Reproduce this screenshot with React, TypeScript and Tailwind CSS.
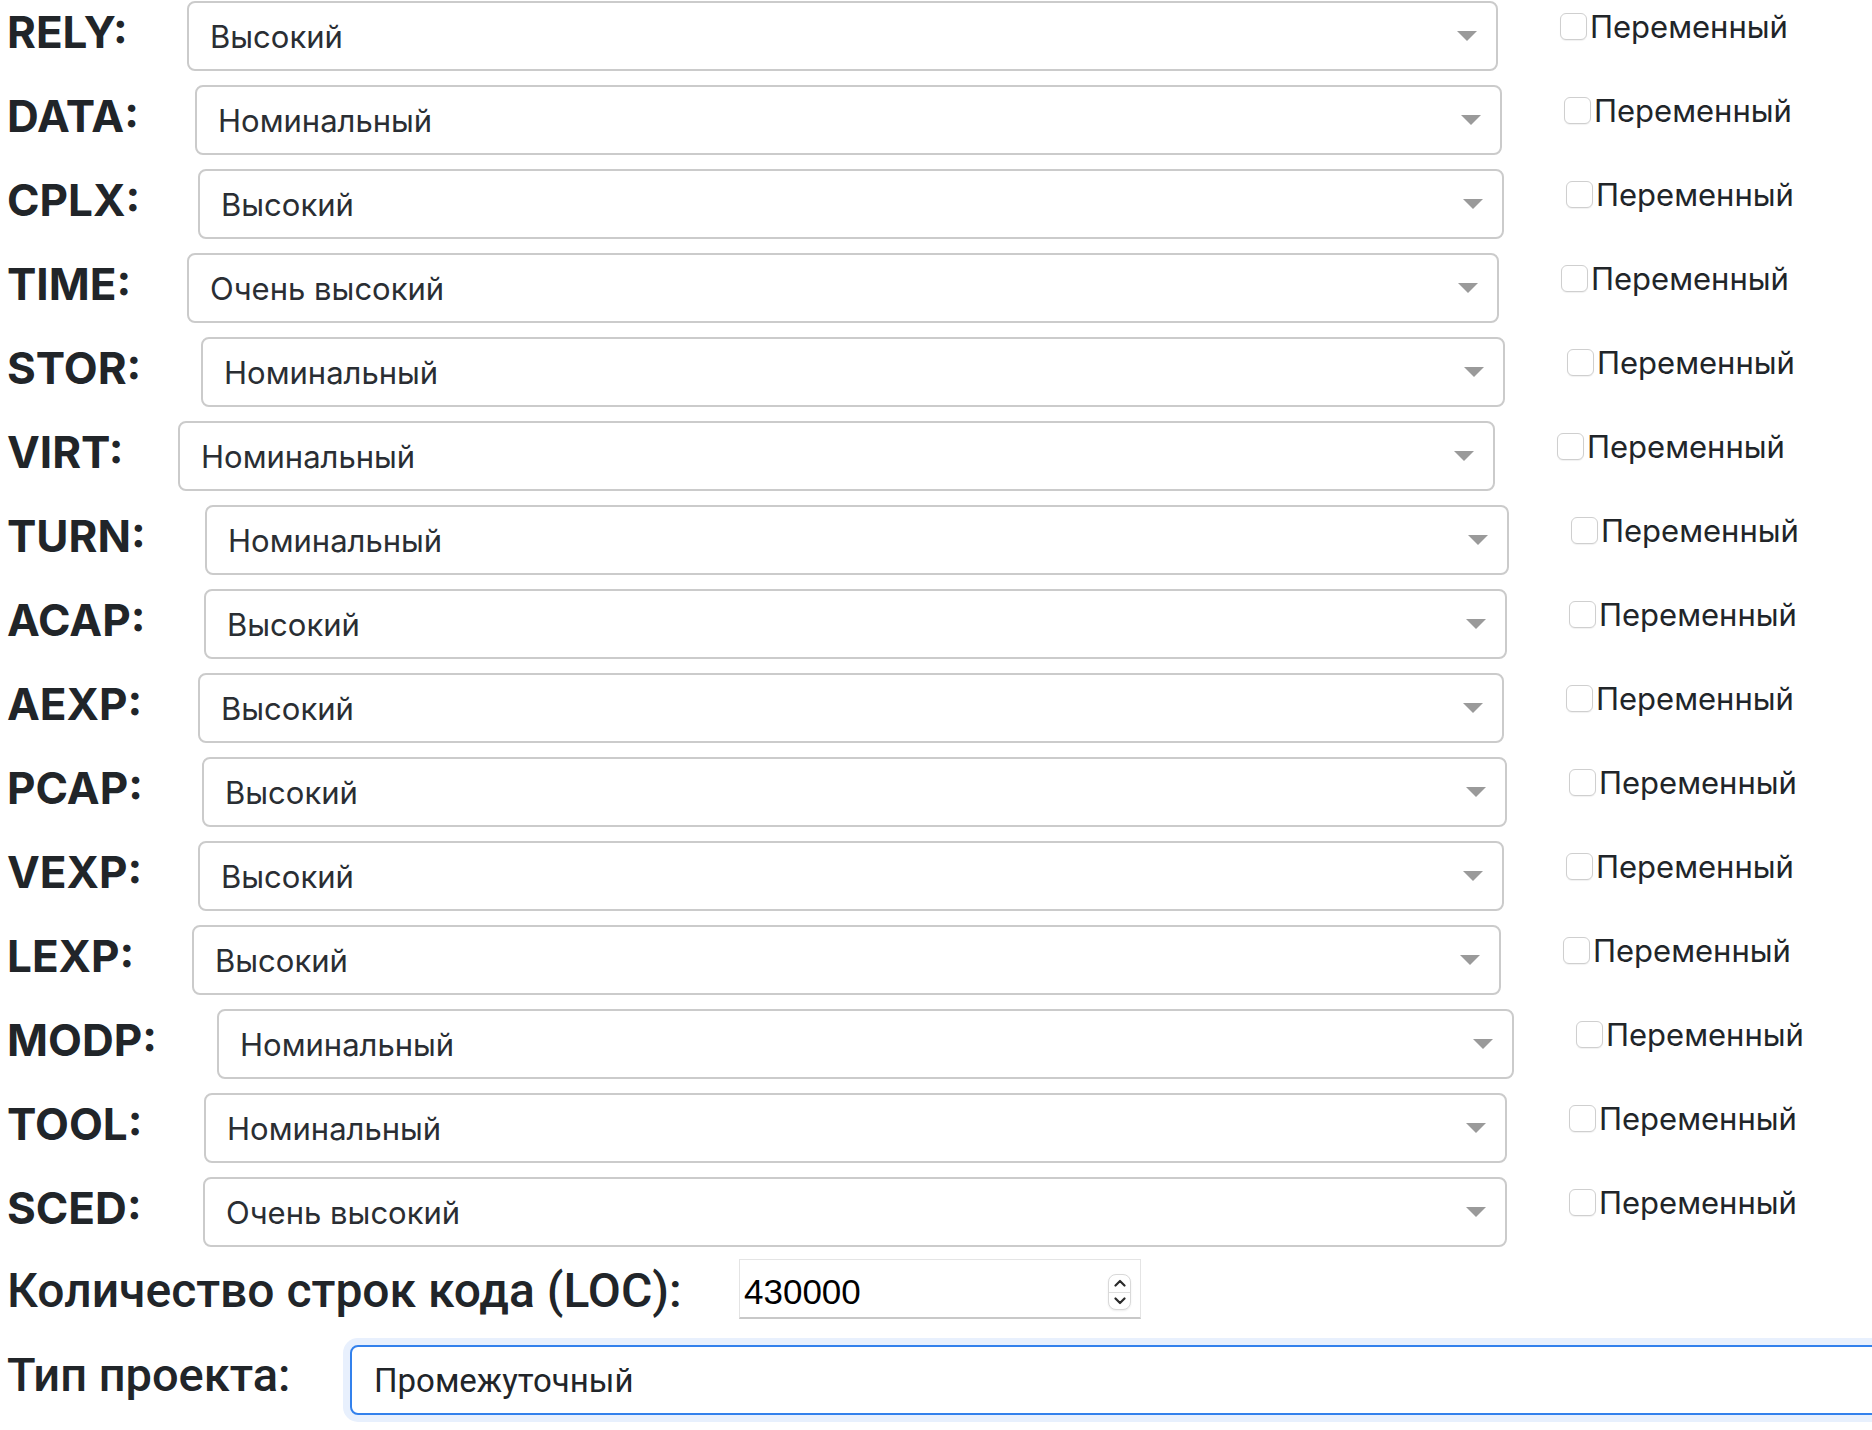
import React from "react";

type Row = { name: string; value: string; lw: string; sw: string };

const rows: Row[] = [
  { name: "RELY", value: "Высокий", lw: "w-[180px]", sw: "w-[1311px]" },
  { name: "DATA", value: "Номинальный", lw: "w-[188px]", sw: "w-[1307px]" },
  { name: "CPLX", value: "Высокий", lw: "w-[191px]", sw: "w-[1306px]" },
  { name: "TIME", value: "Очень высокий", lw: "w-[180px]", sw: "w-[1312px]" },
  { name: "STOR", value: "Номинальный", lw: "w-[194px]", sw: "w-[1304px]" },
  { name: "VIRT", value: "Номинальный", lw: "w-[171px]", sw: "w-[1317px]" },
  { name: "TURN", value: "Номинальный", lw: "w-[198px]", sw: "w-[1304px]" },
  { name: "ACAP", value: "Высокий", lw: "w-[197px]", sw: "w-[1303px]" },
  { name: "AEXP", value: "Высокий", lw: "w-[191px]", sw: "w-[1306px]" },
  { name: "PCAP", value: "Высокий", lw: "w-[195px]", sw: "w-[1305px]" },
  { name: "VEXP", value: "Высокий", lw: "w-[191px]", sw: "w-[1306px]" },
  { name: "LEXP", value: "Высокий", lw: "w-[185px]", sw: "w-[1309px]" },
  { name: "MODP", value: "Номинальный", lw: "w-[210px]", sw: "w-[1297px]" },
  { name: "TOOL", value: "Номинальный", lw: "w-[197px]", sw: "w-[1303px]" },
  { name: "SCED", value: "Очень высокий", lw: "w-[196px]", sw: "w-[1304px]" },
];

function Arrow() {
  return (
    <svg width="20" height="10" viewBox="0 0 20 10" className="shrink-0">
      <polygon points="0,0 20,0 10,10" fill="#9a9a9a" />
    </svg>
  );
}

function ParamRow({ r }: { r: Row }) {
  return (
    <div className="flex items-baseline h-[70px] pl-[7px]">
      <div
        className={`${r.lw} shrink-0 text-[44px] font-bold leading-none text-[#212529] [font-family:Inter,'Liberation_Sans',sans-serif]`}
      >
        {r.name}:
      </div>
      <div
        className={`${r.sw} shrink-0 h-[70px] flex items-center justify-between border-2 border-[#cbcbcb] rounded-[8px] bg-white pl-[21px] pr-[19px]`}
      >
        <span className="text-[31px] leading-none text-[#2a2e33] [font-family:Inter,'Liberation_Sans',sans-serif]">
          {r.value}
        </span>
        <Arrow />
      </div>
      <label className="self-start mt-[10px] ml-[62px] flex items-center shrink-0">
        <span className="w-[27px] h-[27px] rounded-[6px] border border-[#cfcfcf] bg-white shadow-[0_1px_1px_rgba(0,0,0,0.06)] shrink-0" />
        <span className="ml-[3px] text-[31px] leading-none text-[#212529] [font-family:Inter,'Liberation_Sans',sans-serif]">
          Переменный
        </span>
      </label>
    </div>
  );
}

function Spinner() {
  return (
    <div className="mt-[14px] mr-[9px] w-[23px] h-[36px] rounded-[8px] border border-[#d9d9d9] bg-white shadow-[0_1px_2px_rgba(0,0,0,0.08)] flex flex-col shrink-0">
      <div className="flex-1 flex items-center justify-center border-b border-[#dedede]">
        <svg width="12" height="8" viewBox="0 0 12 8">
          <polyline points="1.5,6.5 6,2 10.5,6.5" fill="none" stroke="#2b2b2b" strokeWidth="2.2" strokeLinecap="round" strokeLinejoin="round" />
        </svg>
      </div>
      <div className="flex-1 flex items-center justify-center">
        <svg width="12" height="8" viewBox="0 0 12 8">
          <polyline points="1.5,1.5 6,6 10.5,1.5" fill="none" stroke="#2b2b2b" strokeWidth="2.2" strokeLinecap="round" strokeLinejoin="round" />
        </svg>
      </div>
    </div>
  );
}

export default function App() {
  return (
    <div className="w-full min-h-[1430px] overflow-hidden bg-white pt-[1px]">
      <div className="flex flex-col gap-[14px]">
        {rows.map((r) => (
          <ParamRow key={r.name} r={r} />
        ))}
      </div>

      <div className="flex items-start mt-[12px] pl-[7px] h-[60px]">
        <div className="w-[732px] shrink-0 mt-[8px] text-[48px] font-medium leading-none text-[#212529] [font-family:Roboto,'Liberation_Sans',sans-serif]">
          Количество строк кода (LOC):
        </div>
        <div className="w-[402px] h-[60px] shrink-0 flex items-start justify-between bg-white border border-[#e4e4e4] border-b-2 border-b-[#c8c8c8]">
          <span className="pt-[14px] pl-[4px] text-[35px] leading-none text-black [font-family:'Liberation_Sans',Arial,sans-serif]">
            430000
          </span>
          <Spinner />
        </div>
      </div>

      <div className="flex items-start mt-[26px] pl-[7px]">
        <div className="w-[343px] shrink-0 mt-[6px] text-[47px] font-medium leading-none text-[#212529] [font-family:Roboto,'Liberation_Sans',sans-serif]">
          Тип проекта:
        </div>
        <div className="w-[1700px] h-[70px] shrink-0 flex items-center border-2 border-[#3381ec] rounded-[8px] bg-white ring-[7px] ring-[#e8f0fd] pl-[22px]">
          <span className="text-[33px] leading-none text-[#212529] [font-family:Roboto,'Liberation_Sans',sans-serif]">
            Промежуточный
          </span>
        </div>
      </div>
    </div>
  );
}
